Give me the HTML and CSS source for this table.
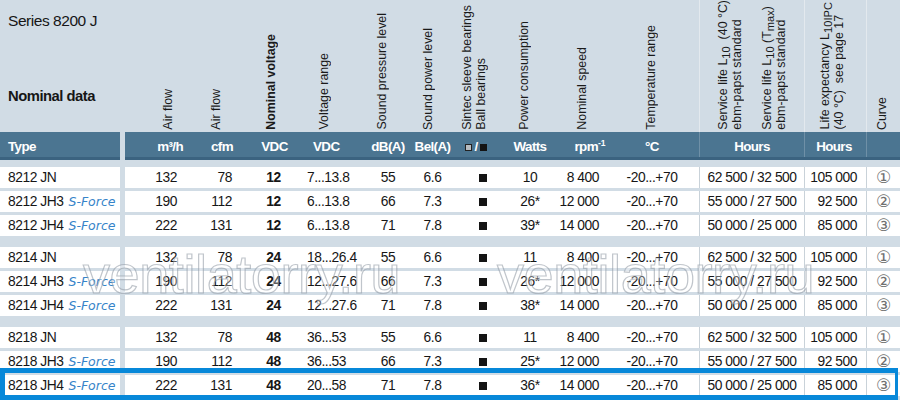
FILE: index.html
```html
<!DOCTYPE html>
<html>
<head>
<meta charset="utf-8">
<title>Series 8200 J</title>
<link rel="stylesheet" href="styles.css">
</head>
<body>
<div class="sheet">
  <div class="line head">
    <div class="type">
      <div class="series">Series 8200 J</div>
      <div class="nominal">Nominal data</div>
    </div>
    <div class="cells">
      <div class="h1"><span class="rot">Air flow</span></div>
      <div class="h2"><span class="rot">Air flow</span></div>
      <div class="h3"><span class="rot b">Nominal voltage</span></div>
      <div class="h4"><span class="rot">Voltage range</span></div>
      <div class="h5"><span class="rot">Sound pressure level</span></div>
      <div class="h6"><span class="rot">Sound power level</span></div>
      <div class="h7"><span class="rot">Sintec sleeve bearings<br>Ball bearings</span></div>
      <div class="h8"><span class="rot">Power consumption</span></div>
      <div class="h9"><span class="rot">Nominal speed</span></div>
      <div class="h10"><span class="rot">Temperature range</span></div>
      <div class="h11 sep"><span class="rot">Service life L<sub>10</sub>&nbsp; (40 °C)<br>ebm-papst standard</span><span class="rot">Service life L<sub>10</sub> (T<sub>max</sub>)<br>ebm-papst standard</span></div>
      <div class="h12 sep"><span class="rot">Life expectancy L<sub>10IPC</sub><br>(40 °C)&nbsp; see page 17</span></div>
      <div class="h13 sep"><span class="rot">Curve</span></div>
    </div>
  </div>

  <div class="line bar">
    <div class="type"><div class="tt">Type</div></div>
    <div class="cells">
      <div class="c1">m³/h</div>
      <div class="c2">cfm</div>
      <div class="c3">VDC</div>
      <div class="c4">VDC</div>
      <div class="c5">dB(A)</div>
      <div class="c6">Bel(A)</div>
      <div class="c7"><span class="sq g"></span><span class="sl">/</span><span class="sq"></span></div>
      <div class="c8">Watts</div>
      <div class="c9">rpm<sup class="up">-1</sup></div>
      <div class="c10">°C</div>
      <div class="c11 sep">Hours</div>
      <div class="c12 sep">Hours</div>
      <div class="c13 sep"></div>
    </div>
  </div>

  <div class="group">
    <div class="line row">
      <div class="type">8212 JN</div>
      <div class="cells">
        <div class="c1">132</div><div class="c2">78</div><div class="c3">12</div><div class="c4">7...13.8</div><div class="c5">55</div><div class="c6">6.6</div><div class="c7"><span class="sq"></span></div><div class="c8">10</div><div class="c9">8 400</div><div class="c10">-20...+70</div><div class="c11 sep">62 500 / 32 500</div><div class="c12 sep">105 000</div><div class="c13 sep">①</div>
      </div>
    </div>
    <div class="line row">
      <div class="type">8212 JH3<span class="sf">S-Force</span></div>
      <div class="cells">
        <div class="c1">190</div><div class="c2">112</div><div class="c3">12</div><div class="c4">6...13.8</div><div class="c5">66</div><div class="c6">7.3</div><div class="c7"><span class="sq"></span></div><div class="c8">26*</div><div class="c9">12 000</div><div class="c10">-20...+70</div><div class="c11 sep">55 000 / 27 500</div><div class="c12 sep">92 500</div><div class="c13 sep">②</div>
      </div>
    </div>
    <div class="line row">
      <div class="type">8212 JH4<span class="sf">S-Force</span></div>
      <div class="cells">
        <div class="c1">222</div><div class="c2">131</div><div class="c3">12</div><div class="c4">6...13.8</div><div class="c5">71</div><div class="c6">7.8</div><div class="c7"><span class="sq"></span></div><div class="c8">39*</div><div class="c9">14 000</div><div class="c10">-20...+70</div><div class="c11 sep">50 000 / 25 000</div><div class="c12 sep">85 000</div><div class="c13 sep">③</div>
      </div>
    </div>
  </div>

  <div class="group">
    <div class="line row">
      <div class="type">8214 JN</div>
      <div class="cells">
        <div class="c1">132</div><div class="c2">78</div><div class="c3">24</div><div class="c4">18...26.4</div><div class="c5">55</div><div class="c6">6.6</div><div class="c7"><span class="sq"></span></div><div class="c8">11</div><div class="c9">8 400</div><div class="c10">-20...+70</div><div class="c11 sep">62 500 / 32 500</div><div class="c12 sep">105 000</div><div class="c13 sep">①</div>
      </div>
    </div>
    <div class="line row">
      <div class="type">8214 JH3<span class="sf">S-Force</span></div>
      <div class="cells">
        <div class="c1">190</div><div class="c2">112</div><div class="c3">24</div><div class="c4">12...27.6</div><div class="c5">66</div><div class="c6">7.3</div><div class="c7"><span class="sq"></span></div><div class="c8">26*</div><div class="c9">12 000</div><div class="c10">-20...+70</div><div class="c11 sep">55 000 / 27 500</div><div class="c12 sep">92 500</div><div class="c13 sep">②</div>
      </div>
    </div>
    <div class="line row">
      <div class="type">8214 JH4<span class="sf">S-Force</span></div>
      <div class="cells">
        <div class="c1">222</div><div class="c2">131</div><div class="c3">24</div><div class="c4">12...27.6</div><div class="c5">71</div><div class="c6">7.8</div><div class="c7"><span class="sq"></span></div><div class="c8">38*</div><div class="c9">14 000</div><div class="c10">-20...+70</div><div class="c11 sep">50 000 / 25 000</div><div class="c12 sep">85 000</div><div class="c13 sep">③</div>
      </div>
    </div>
  </div>

  <div class="group">
    <div class="line row">
      <div class="type">8218 JN</div>
      <div class="cells">
        <div class="c1">132</div><div class="c2">78</div><div class="c3">48</div><div class="c4">36...53</div><div class="c5">55</div><div class="c6">6.6</div><div class="c7"><span class="sq"></span></div><div class="c8">11</div><div class="c9">8 400</div><div class="c10">-20...+70</div><div class="c11 sep">62 500 / 32 500</div><div class="c12 sep">105 000</div><div class="c13 sep">①</div>
      </div>
    </div>
    <div class="line row">
      <div class="type">8218 JH3<span class="sf">S-Force</span></div>
      <div class="cells">
        <div class="c1">190</div><div class="c2">112</div><div class="c3">48</div><div class="c4">36...53</div><div class="c5">66</div><div class="c6">7.3</div><div class="c7"><span class="sq"></span></div><div class="c8">25*</div><div class="c9">12 000</div><div class="c10">-20...+70</div><div class="c11 sep">55 000 / 27 500</div><div class="c12 sep">92 500</div><div class="c13 sep">②</div>
      </div>
    </div>
    <div class="line row hl">
      <div class="type">8218 JH4<span class="sf">S-Force</span></div>
      <div class="cells">
        <div class="c1">222</div><div class="c2">131</div><div class="c3">48</div><div class="c4">20...58</div><div class="c5">71</div><div class="c6">7.8</div><div class="c7"><span class="sq"></span></div><div class="c8">36*</div><div class="c9">14 000</div><div class="c10">-20...+70</div><div class="c11 sep">50 000 / 25 000</div><div class="c12 sep">85 000</div><div class="c13 sep">③</div>
      </div>
    </div>
  </div>

  <div class="wm wm1">ventilatorry.ru</div>
  <div class="wm wm2">ventilatorry.ru</div>
</div>
</body>
</html>
```

FILE: styles.css
```css
* { box-sizing: border-box; }

body { margin: 0; }

.sheet {
  position: relative;
  width: 900px;
  height: 400px;
  overflow: hidden;
  background: #d1dce5;
  color: #161616;
  font-family: "Liberation Sans", Arial, sans-serif;
}

.line { display: flex; }

.type { width: 120px; flex: none; white-space: nowrap; }

.cells {
  margin-left: 5px;
  width: 775px;
  display: grid;
  grid-template-columns: 65px 55px 55px 60px 50px 45px 50px 50px 60px 84px 105px 62px 34px;
}
.cells > div { white-space: nowrap; }

/* ---------- header ---------- */
.head { height: 132px; }
.head .type { padding: 11px 0 0 8px; }
.series { font-size: 15.5px; letter-spacing: -0.45px; line-height: 20px; }
.nominal { font-size: 14.8px; letter-spacing: -0.5px; line-height: 20px; font-weight: bold; margin-top: 55px; }

.head .cells > div {
  display: flex;
  justify-content: center;
  align-items: flex-end;
  padding-bottom: 12px;
}
.head .sep { border-left: 1px solid #e3e9ee; }

.rot {
  display: block;
  writing-mode: vertical-rl;
  transform: rotate(180deg);
  font-size: 12.4px;
  line-height: 14px;
  white-space: nowrap;
  color: #1a1a1a;
}
.rot.b { font-weight: bold; }
.rot sub { font-size: 0.9em; vertical-align: -0.3em; line-height: 0; }

.h1 .rot { margin-left: 20px; }
.h2 .rot { margin-left: -3px; }
.h3 .rot { margin-left: -3px; }
.h4 .rot { margin-left: -12px; }
.h5 .rot { margin-left: -6px; }
.h6 .rot { margin-left: -9px; }
.h7 .rot { margin-left: -12px; }
.h8 .rot { margin-left: -12px; }
.h9 .rot { margin-left: -6px; }
.h10 .rot { margin-left: -12px; }
.head .h11 { gap: 16px; }
.h12 .rot { margin-left: -8px; }
.h13 .rot { margin-left: -3px; }

/* ---------- blue bar ---------- */
.bar { margin-bottom: 7px; }
.bar .type, .bar .cells {
  background: #4b7591;
  border-bottom: 3px solid #3b6380;
  color: #fff;
  font-weight: bold;
  font-size: 13.4px;
  letter-spacing: -0.6px;
  line-height: 21px;
}
.bar .tt, .bar .cells > div { padding-top: 4px; }
.bar .tt { padding-left: 8px; }
.bar .sep { border-left: 1px solid #6f90a7; }

.bar .c1 { text-align: right; padding-right: 7px; }
.bar .c2 { text-align: right; padding-right: 12px; }
.bar .c3 { text-align: center; padding-left: 4px; }
.bar .c4 { text-align: left; padding-left: 13px; }
.bar .c5 { text-align: center; padding-left: 6px; }
.bar .c6 { text-align: center; }
.bar .c7 { text-align: center; padding-right: 8px; }
.bar .c8 { text-align: center; }
.bar .c9 { text-align: center; padding-left: 10px; }
.bar .c10 { text-align: center; padding-right: 10px; }
.bar .c11 { text-align: center; }
.bar .c12 { text-align: center; padding-right: 3px; }

.up { font-size: 8.5px; vertical-align: 5px; line-height: 0; letter-spacing: 0; }

.sq {
  display: inline-block;
  width: 8px;
  height: 8px;
  background: #141414;
  vertical-align: middle;
}
.bar .sq { width: 7px; height: 7px; vertical-align: 0; }
.sq.g { background: #b8bcc0; border: 1px solid #222; }
.sl { margin: 0 2px; }

/* ---------- rows ---------- */
.group { display: flex; flex-direction: column; gap: 3px; margin-bottom: 11px; }

.row .type, .row .cells {
  background: #fff;
  height: 21px;
  line-height: 21px;
  font-size: 13.8px;
  letter-spacing: -0.45px;
}
.row .type { padding-left: 8px; }
.row .sep { border-left: 1px solid #c9d2d9; }

.row .c1, .row .c2 { text-align: right; padding-right: 13px; }
.row .c3 { text-align: center; padding-left: 2px; font-weight: bold; }
.row .c4 { text-align: left; padding-left: 7px; }
.row .c5 { text-align: center; padding-left: 6px; }
.row .c6, .row .c8, .row .c11, .row .c13 { text-align: center; }
.row .c7 { text-align: center; padding-left: 6px; }
.row .c9 { text-align: right; padding-right: 16px; }
.row .c10 { text-align: center; padding-right: 10px; }
.row .c12 { text-align: right; padding-right: 9px; }
.row .c13 {
  font-family: "DejaVu Sans", sans-serif;
  font-size: 17px;
  letter-spacing: 0;
  color: #707070;
}

.sf {
  margin-left: 5px;
  font-family: "DejaVu Sans", sans-serif;
  font-style: italic;
  font-size: 12.5px;
  letter-spacing: 0;
  color: #3684c9;
}

.row.hl { position: relative; }
.row.hl::after {
  content: "";
  position: absolute;
  top: -7px;
  bottom: -4px;
  left: 0;
  right: 2px;
  border: 5px solid #0788d9;
  border-right-width: 3px;
}

/* ---------- watermark ---------- */
.wm {
  position: absolute;
  top: 247px;
  font-size: 54px;
  line-height: 1;
  letter-spacing: -0.4px;
  color: rgba(255, 255, 255, 0.3);
  -webkit-text-stroke: 1.2px rgba(140, 150, 160, 0.55);
  white-space: nowrap;
  pointer-events: none;
}
.wm1 { left: 83px; }
.wm2 { left: 497px; }
```
